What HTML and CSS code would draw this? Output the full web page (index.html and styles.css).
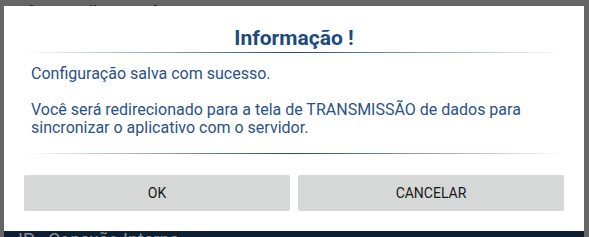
FILE: index.html
```html
<!DOCTYPE html>
<html>

<head>
    <meta charset="utf-8">
    <title>Informação</title>
    <link rel="stylesheet" href="styles.css">
</head>

<body>
    <div class="page">
        <h1 class="page-title">Informação Geral</h1>
        <div class="page-fill"></div>
        <div class="bar">
            <span class="bar-text">IP - Conexão Interna</span>
        </div>
    </div>

    <div class="dialog">
        <h2 class="dialog-title">Informação !</h2>
        <hr class="divider">
        <div class="dialog-body">
            Configuração salva com sucesso.<br><br>
            Você será redirecionado para a tela de TRANSMISSÃO de dados para
            sincronizar o aplicativo com o servidor.
        </div>
        <hr class="divider">
        <div class="actions">
            <button class="btn" type="button">OK</button>
            <button class="btn" type="button">CANCELAR</button>
        </div>
    </div>
</body>

</html>
```

FILE: styles.css
```css
html,
body {
    margin: 0;
    height: 100%;
}

body {
    background-color: #666666;
    font-family: Roboto, "Liberation Sans", sans-serif;
    overflow: hidden;
}

.page {
    display: flex;
    flex-direction: column;
    height: 100%;
}

.page-title {
    margin: 0;
    padding: 0 0 0 10px;
    height: 6px;
    overflow: hidden;
    font-size: 19px;
    line-height: 26px;
    color: #1c1c1c;
}

.page-fill {
    flex: 1;
}

.bar {
    height: 6px;
    margin: 0 5px 0 4px;
    padding-left: 14px;
    background-color: #0f1f33;
    overflow: hidden;
}

.bar-text {
    display: block;
    font-size: 18px;
    line-height: 18px;
    color: #8a9099;
}

.dialog {
    position: absolute;
    top: 6px;
    left: 4px;
    width: 580px;
    height: 225px;
    background-color: #ffffff;
    box-sizing: border-box;
    padding: 20px 20px 0 20px;
}

.dialog-title {
    margin: 0;
    text-align: center;
    font-size: 21px;
    line-height: 24px;
    font-weight: bold;
    color: #1d4a7c;
}

.divider {
    border: 0;
    height: 1px;
    margin: 2px 0 0 0;
    background: linear-gradient(to right, rgba(31, 74, 124, 0), #1d4a7c 50%, rgba(31, 74, 124, 0));
}

.dialog-body {
    padding: 12px 7px 0 7px;
    height: 86px;
    font-size: 16px;
    line-height: 18px;
    color: #2a5286;
}

.actions {
    display: flex;
    gap: 8px;
    padding-top: 21px;
}

.btn {
    flex: 1;
    height: 36px;
    border: 0;
    border-radius: 2px;
    background-color: #d6d7d7;
    font-family: Roboto, "Liberation Sans", sans-serif;
    font-size: 14px;
    color: #1a1a1a;
}
```
